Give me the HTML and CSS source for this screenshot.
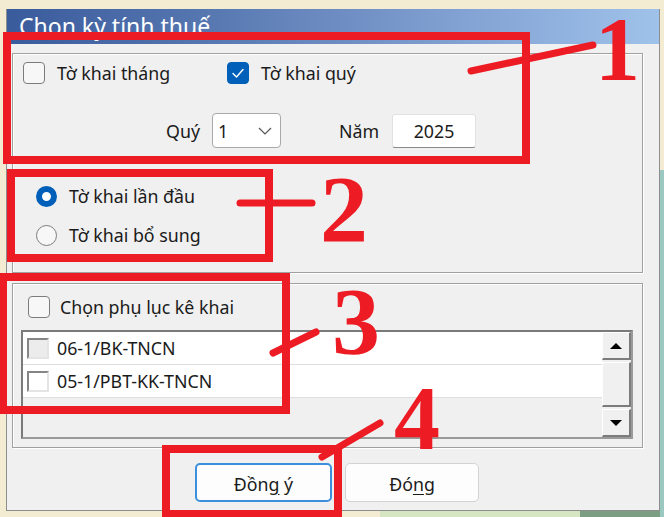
FILE: index.html
```html
<!DOCTYPE html>
<html lang="vi">
<head>
<meta charset="utf-8">
<title>Chọn kỳ tính thuế</title>
<link rel="stylesheet" href="styles.css">
</head>
<body>
<div class="window">
  <div class="titlebar">Chọn kỳ tính thuế</div>
  <div class="client">
    <div class="group g1">
      <div class="opt-row">
        <label class="opt first"><span class="cb"></span><span>Tờ khai tháng</span></label>
        <label class="opt"><span class="cb checked"><svg viewBox="0 0 22 22" width="22" height="22"><polyline points="6,11.5 9.5,15 16,7.5" fill="none" stroke="#fff" stroke-width="1.4" stroke-linecap="round" stroke-linejoin="round"/></svg></span><span>Tờ khai quý</span></label>
      </div>
      <div class="period-row">
        <span class="lbl-quy">Quý</span>
        <div class="select"><span>1</span><svg class="chev" viewBox="0 0 14 8" width="14" height="8"><polyline points="1,1 7,7 13,1" fill="none" stroke="#555" stroke-width="1.2"/></svg></div>
        <span class="lbl-nam">Năm</span>
        <div class="textbox">2025</div>
      </div>
      <div class="radio-row r1"><span class="radio on"></span><span>Tờ khai lần đầu</span></div>
      <div class="radio-row r2"><span class="radio"></span><span>Tờ khai bổ sung</span></div>
    </div>
    <div class="group g2">
      <label class="opt-row pl"><span class="cb"></span><span class="pl-text">Chọn phụ lục kê khai</span></label>
      <div class="list">
        <div class="rows">
          <div class="lrow"><span class="cb3d gray"></span><span>06-1/BK-TNCN</span></div>
          <div class="lrow"><span class="cb3d"></span><span>05-1/PBT-KK-TNCN</span></div>
        </div>
        <div class="sb">
          <div class="sbtn"><span class="tri-up"></span></div>
          <div class="thumb"></div>
          <div class="sbtn"><span class="tri-down"></span></div>
        </div>
      </div>
    </div>
    <div class="actions">
      <button class="btn default">Đồn<u>g</u> ý</button>
      <button class="btn close">Đó<u>n</u>g</button>
    </div>
  </div>
</div>

<div class="mark b1"></div>
<div class="mark b2"></div>
<div class="mark b3"></div>
<div class="mark b4"></div>
<svg class="lines" viewBox="0 0 664 517" width="664" height="517">
  <line x1="471" y1="71" x2="593" y2="45" />
  <line x1="240" y1="203" x2="312" y2="203" />
  <line x1="273" y1="353" x2="316" y2="332" />
  <line x1="322" y1="457" x2="380" y2="423" />
</svg>
<div class="num n1">1</div>
<div class="num n2">2</div>
<div class="num n3">3</div>
<div class="num n4">4</div>
</body>
</html>
```

FILE: styles.css
```css
* { box-sizing: border-box; }
html, body { margin: 0; }
body {
  width: 664px;
  height: 517px;
  overflow: hidden;
  position: relative;
  padding: 9px 0 0 6px;
  background:
    linear-gradient(#9cc8c2, #9cc8c2) 660px 170px / 4px 347px no-repeat,
    linear-gradient(to right, #d6e6c2 0, #d6e6c2 200px, #7c9f84 200px) 380px 511px / 284px 6px no-repeat,
    #f3ecd2;
  font-family: "Noto Sans", "Liberation Sans", sans-serif;
  font-size: 17.8px;
  color: #1b1b1b;
}

.window {
  width: 654px;
  height: 502px;
  border: 1px solid #8e8e8e;
  border-top: 0;
  background: #f0f0f0;
  display: flex;
  flex-direction: column;
}
.titlebar {
  height: 35px;
  background: linear-gradient(to right, #3a5b9c 0%, #5676b0 30%, #7d9dcf 65%, #9fc2ea 100%);
  color: #fff;
  font-size: 23px;
  line-height: 35px;
  padding-left: 12px;
  white-space: nowrap;
  overflow: hidden;
}
.client {
  flex: 1;
  padding: 9px 0 0 5px;
  display: flex;
  flex-direction: column;
}
.group {
  width: 631px;
  border: 1px solid #a0a0a0;
  box-shadow: 1px 1px 0 #fff, inset 1px 1px 0 #fff;
}
.g1 { height: 220px; padding: 8px 0 0 10px; }
.g2 { height: 165px; margin-top: 10px; padding: 12px 0 0 8px; }

.opt-row { display: flex; align-items: center; height: 22px; }
.opt { display: flex; align-items: center; gap: 12px; }
.opt.first { width: 204px; }
.cb {
  width: 22px;
  height: 22px;
  border: 1px solid #7c7c7c;
  border-radius: 4px;
  background: #f7f7f7;
  flex: none;
  display: block;
}
.cb.checked { background: #005fb8; border-color: #005fb8; }
.cb.checked svg { display: block; margin: -1px; }
.pl { padding-left: 7px; gap: 10px; }

.period-row {
  display: flex;
  align-items: center;
  margin-top: 29px;
  height: 35px;
  padding-left: 143px;
}
.lbl-quy { width: 46px; }
.select {
  width: 69px;
  height: 35px;
  background: #fff;
  border: 1px solid #a9a9a9;
  border-radius: 4px;
  display: flex;
  align-items: center;
  justify-content: space-between;
  padding: 0 8px 0 5px;
}
.chev { display: block; }
.lbl-nam { margin-left: 58px; width: 53px; }
.textbox {
  width: 84px;
  height: 34px;
  background: #fff;
  border: 1px solid #e2e2e2;
  border-bottom: 1px solid #8a8a8a;
  border-radius: 3px;
  display: flex;
  align-items: center;
  justify-content: center;
}

.radio-row { display: flex; align-items: center; gap: 12px; height: 24px; padding-left: 13px; }
.r1 { margin-top: 36px; }
.r2 { margin-top: 15px; }
.radio {
  width: 21px;
  height: 21px;
  border-radius: 50%;
  border: 1px solid #7c7c7c;
  background: #f7f7f7;
  flex: none;
}
.radio.on { border: 6px solid #005fb8; background: #fff; }

.list {
  margin-top: 12px;
  width: 612px;
  height: 109px;
  display: flex;
  border: 2px solid;
  border-color: #7a7a7a #9a9a9a #9a9a9a #7a7a7a;
  background: #f0f0f0;
}
.rows { flex: 1; }
.lrow {
  height: 33px;
  background: #fff;
  border-bottom: 1px solid #dedede;
  display: flex;
  align-items: center;
  gap: 8px;
  padding-left: 4px;
}
.cb3d {
  width: 22px;
  height: 21px;
  border: 2px solid;
  border-color: #858585 #e4e4e4 #e4e4e4 #858585;
  background: #fff;
  flex: none;
}
.cb3d.gray { background: #ececec; }

.sb { width: 29px; display: flex; flex-direction: column; }
.sbtn, .thumb {
  background: #f0f0f0;
  border-style: solid;
  border-width: 1px 2px 2px 1px;
  border-color: #fff #7c7c7c #7c7c7c #fff;
}
.sbtn { height: 28px; display: flex; align-items: center; justify-content: center; }
.thumb { flex: 1; margin: 2px 0; }
.tri-up { width: 0; height: 0; border-left: 6px solid transparent; border-right: 6px solid transparent; border-bottom: 6px solid #000; }
.tri-down { width: 0; height: 0; border-left: 6px solid transparent; border-right: 6px solid transparent; border-top: 6px solid #000; }

.actions { display: flex; gap: 13px; margin-top: 15px; padding-left: 183px; }
.btn {
  width: 134px;
  height: 39px;
  border: 1px solid #d3d3d3;
  border-radius: 5px;
  background: #fdfdfd;
  font: inherit;
  color: #1b1b1b;
  padding: 3px 0 0;
}
.btn.default { width: 137px; border: 2px solid #3b8fdc; }
.btn u { text-underline-offset: 3px; }

.mark { position: absolute; border: 8px solid #ed1c24; }
.b1 { left: 3px; top: 32px; width: 527px; height: 132px; }
.b2 { left: 7px; top: 169px; width: 266px; height: 93px; }
.b3 { left: 0; top: 273px; width: 290px; height: 141px; border-left-width: 7px; }
.b4 { left: 162px; top: 445px; width: 180px; height: 73px; }

.lines { position: absolute; left: 0; top: 0; }
.lines line { stroke: #ed1c24; stroke-width: 7; stroke-linecap: round; }

.num {
  position: absolute;
  font-family: "Liberation Serif", serif;
  font-weight: bold;
  font-size: 96px;
  line-height: 1;
  color: #ed1c24;
}
.n1 { left: 595px; top: 5px; font-size: 90px; }
.n2 { left: 320px; top: 162px; }
.n3 { left: 332px; top: 274px; }
.n4 { left: 394px; top: 372px; font-size: 92px; }
```
